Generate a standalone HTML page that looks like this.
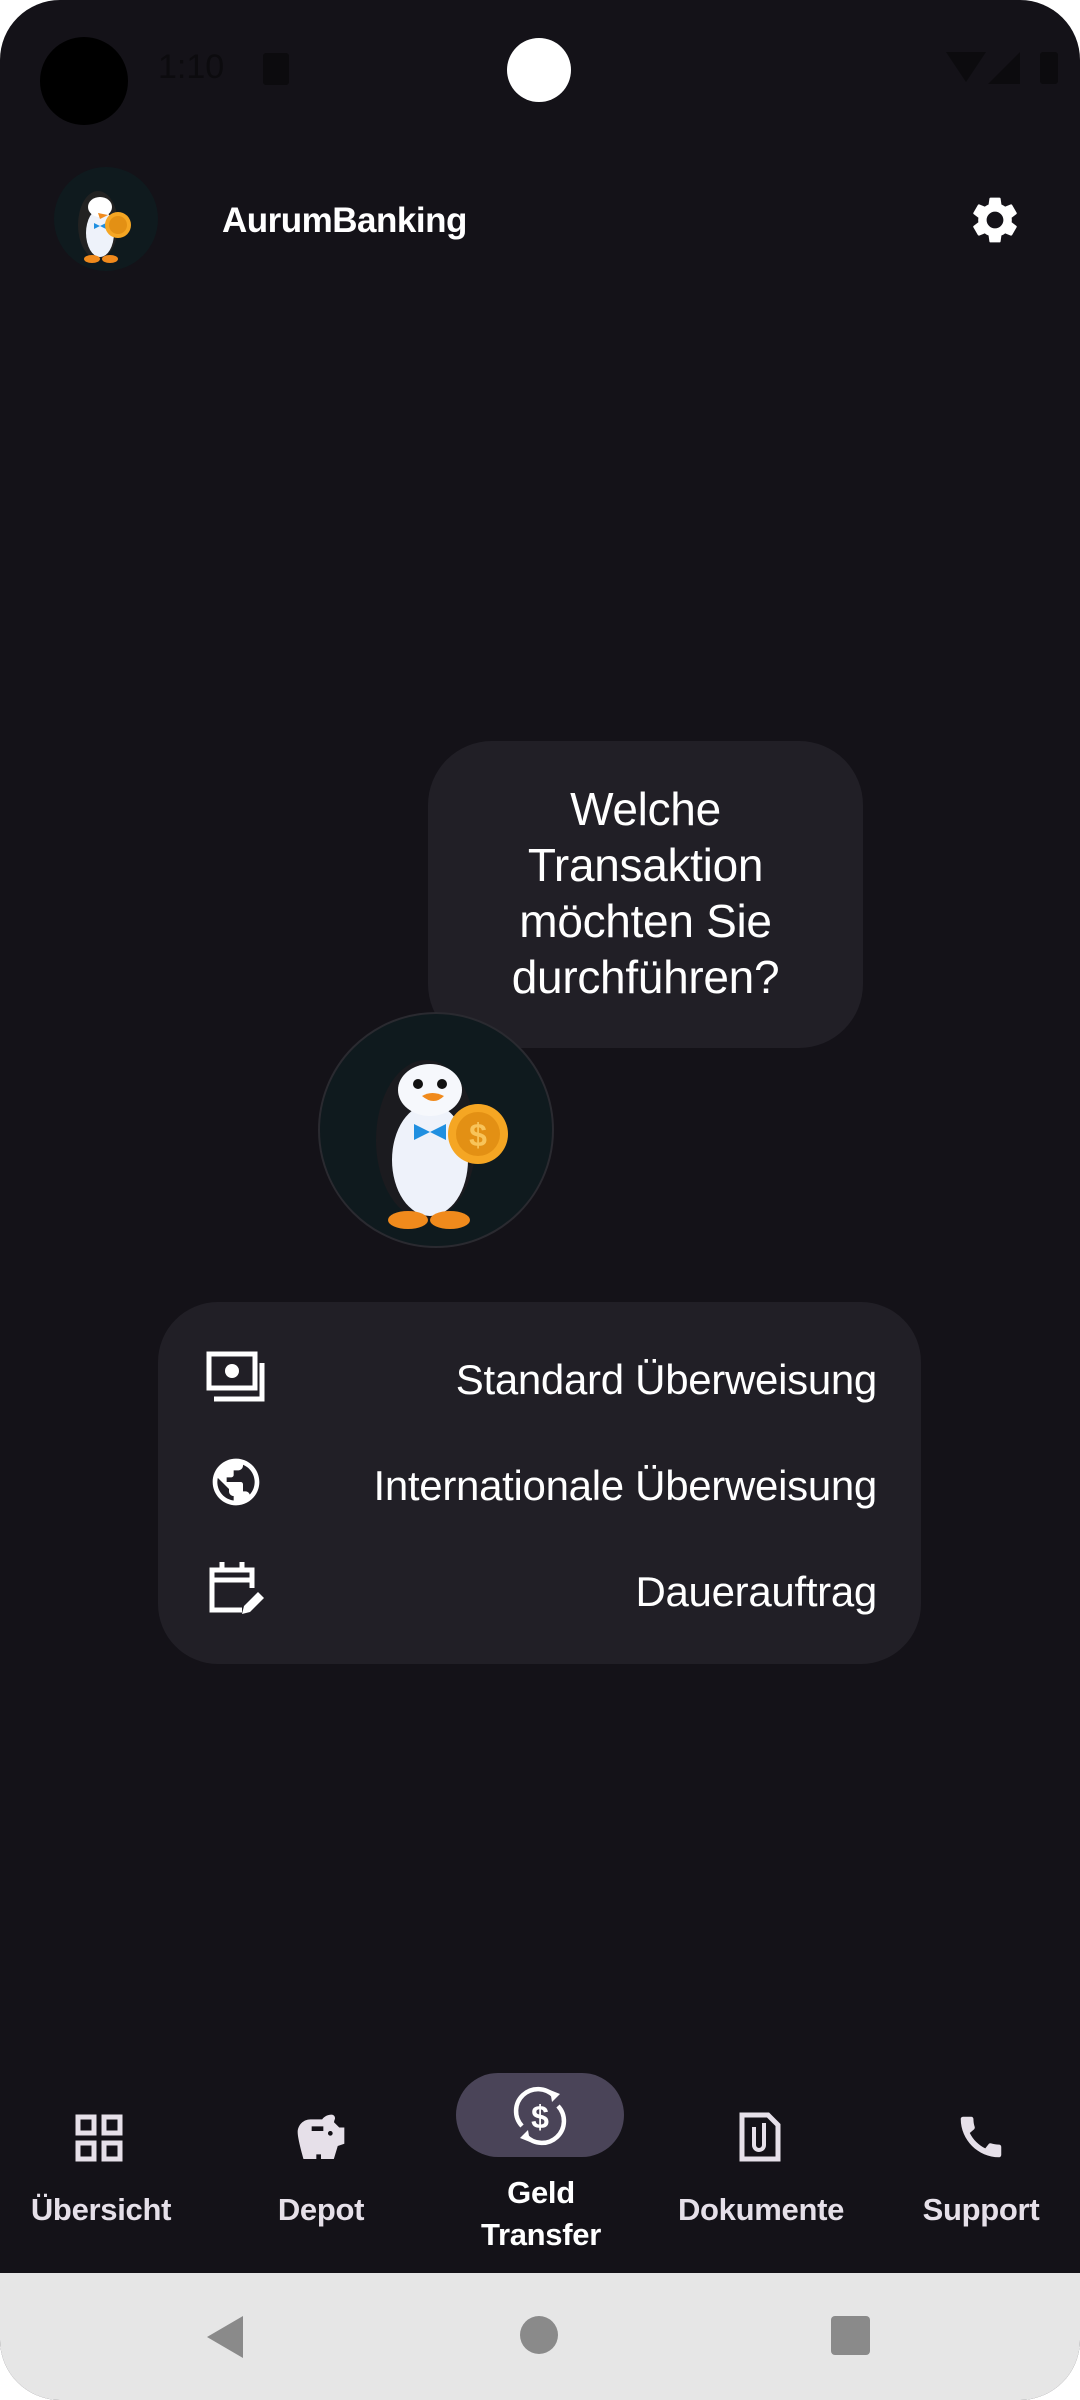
<!DOCTYPE html>
<html><head><meta charset="utf-8"><style>
*{margin:0;padding:0;box-sizing:border-box}
html,body{width:1080px;height:2400px;background:#fff;overflow:hidden;font-family:"Liberation Sans",sans-serif}
.screen{position:absolute;left:0;top:0;width:1080px;height:2400px;background:#141218;border-radius:60px 60px 60px 60px;overflow:hidden}
.abs{position:absolute}
.title{left:222px;top:201px;font-size:35px;color:#fff;font-weight:bold;letter-spacing:-0.5px}
.bubble{left:428px;top:741px;width:435px;height:307px;background:#211F26;border-radius:64px;color:#fff;font-size:46px;text-align:center;line-height:56px;padding-top:40px;letter-spacing:-0.3px}
.card{left:158px;top:1302px;width:763px;height:362px;background:#211F26;border-radius:60px}
.row{position:absolute;right:44px;font-size:42px;color:#fff;text-align:right;letter-spacing:-0.3px}
.nav{position:absolute;left:0;top:2273px;width:1080px;height:127px;background:#E6E6E6}
.lbl{position:absolute;font-size:31px;color:#E6E0E9;font-weight:bold;text-align:center;width:220px;letter-spacing:-0.3px}
</style></head><body>
<div class="screen">
 <div class="abs" style="left:40px;top:37px;width:88px;height:88px;border-radius:50%;background:#000"></div>
 <div class="abs" style="left:507px;top:38px;width:64px;height:64px;border-radius:50%;background:#fff"></div>
 <div class="abs" style="left:158px;top:48px;font-size:34px;color:#0c0b0e">1:10</div>
 <div class="abs" style="left:263px;top:53px;width:26px;height:32px;background:#0c0b0e;border-radius:3px"></div>
 <div class="abs" style="left:946px;top:52px;width:0;height:0;border-left:20px solid transparent;border-right:20px solid transparent;border-top:30px solid #0c0b0e"></div>
 <div class="abs" style="left:988px;top:52px;width:0;height:0;border-left:32px solid transparent;border-bottom:32px solid #0c0b0e"></div>
 <div class="abs" style="left:1040px;top:52px;width:18px;height:32px;background:#0c0b0e;border-radius:3px"></div>

 <svg class="abs" style="left:54px;top:167px" width="104" height="104" viewBox="0 0 104 104">
  <circle cx="52" cy="52" r="52" fill="#0f1a1e"/>
  <ellipse cx="44" cy="58" rx="20" ry="34" fill="#222"/>
  <ellipse cx="46" cy="66" rx="14" ry="24" fill="#eef2fa"/>
  <ellipse cx="46" cy="40" rx="12" ry="10" fill="#fff"/>
  <path d="M44 46 l10 2 l-8 4z" fill="#f08a1c"/>
  <path d="M40 56 l6 3 l-6 3z M52 56 l-6 3 l6 3z" fill="#1f8fe0"/>
  <circle cx="64" cy="58" r="13" fill="#f5a623"/>
  <circle cx="64" cy="58" r="9" fill="#e39014"/>
  <ellipse cx="38" cy="92" rx="8" ry="4" fill="#f08a1c"/><ellipse cx="56" cy="92" rx="8" ry="4" fill="#f08a1c"/>
 </svg>
 <div class="abs title">AurumBanking</div>
 <svg class="abs" style="left:967px;top:192px" width="56" height="56" viewBox="0 0 24 24"><path fill="#fff" d="M19.14 12.94c.04-.3.06-.61.06-.94 0-.32-.02-.64-.07-.94l2.030-1.58a.49.49 0 0 0 .12-.61l-1.92-3.32a.488.488 0 0 0-.59-.22l-2.39.96c-.5-.38-1.03-.7-1.62-.94l-.36-2.54a.484.484 0 0 0-.48-.41h-3.84c-.24 0-.43.17-.47.41l-.36 2.54c-.59.24-1.13.57-1.62.94l-2.39-.96c-.22-.08-.47 0-.59.22L2.74 8.87c-.12.21-.08.47.12.61l2.03 1.58c-.05.3-.09.63-.09.94s.02.64.07.94l-2.03 1.58a.49.49 0 0 0-.12.61l1.92 3.32c.12.22.37.29.59.22l2.39-.96c.5.38 1.03.7 1.62.94l.36 2.54c.05.24.24.41.48.41h3.84c.24 0 .44-.17.47-.41l.36-2.54c.59-.24 1.13-.56 1.62-.94l2.39.96c.22.08.47 0 .59-.22l1.92-3.32c.12-.22.07-.47-.12-.61l-2.01-1.58zM12 15.6c-1.98 0-3.6-1.62-3.6-3.6s1.62-3.6 3.6-3.6 3.6 1.62 3.6 3.6-1.62 3.6-3.6 3.6z"/></svg>

 <div class="abs bubble">Welche<br>Transaktion<br>möchten Sie<br>durchführen?</div>

 <svg class="abs" style="left:318px;top:1012px" width="236" height="236" viewBox="0 0 236 236">
  <circle cx="118" cy="118" r="117" fill="#0f1a1e" stroke="#2a2a30" stroke-width="2"/>
  <ellipse cx="108" cy="128" rx="50" ry="80" fill="#1b1b1f"/>
  <ellipse cx="112" cy="148" rx="38" ry="56" fill="#eef2fa"/>
  <ellipse cx="112" cy="78" rx="32" ry="26" fill="#f6f8fc"/>
  <circle cx="100" cy="72" r="5" fill="#111"/><circle cx="124" cy="72" r="5" fill="#111"/>
  <path d="M104 84 q10 -6 22 0 q-10 10 -22 0z" fill="#f08a1c"/>
  <path d="M96 112 l16 8 l-16 8z M128 112 l-16 8 l16 8z" fill="#1f8fe0"/>
  <circle cx="160" cy="122" r="30" fill="#f5a623"/>
  <circle cx="160" cy="122" r="22" fill="#e39014"/>
  <text x="160" y="134" font-size="32" font-family="Liberation Sans" font-weight="bold" fill="#f8c45a" text-anchor="middle">$</text>
  <ellipse cx="90" cy="208" rx="20" ry="9" fill="#f08a1c"/><ellipse cx="132" cy="208" rx="20" ry="9" fill="#f08a1c"/>
 </svg>

 <div class="abs card">
  <svg class="abs" style="left:48px;top:49px" width="60" height="52" viewBox="0 0 60 52"><rect x="3" y="3" width="46" height="34" fill="none" stroke="#fff" stroke-width="5"/><circle cx="26" cy="20" r="7" fill="#fff"/><path d="M56 12 v36 h-48" fill="none" stroke="#fff" stroke-width="5"/></svg>
  <div class="row" style="top:54px">Standard Überweisung</div>
  <svg class="abs" style="left:50px;top:152px" width="56" height="56" viewBox="0 0 24 24"><path fill="#fff" d="M12 2C6.48 2 2 6.480 2 12s4.48 10 10 10 10-4.48 10-10S17.52 2 12 2zm-1 17.93c-3.95-.49-7-3.85-7-7.93 0-.62.08-1.21.21-1.79L9 15v1c0 1.1.9 2 2 2v1.93zm6.9-2.54c-.26-.81-1-1.39-1.9-1.39h-1v-3c0-.55-.45-1-1-1H8v-2h2c.55 0 1-.45 1-1V7h2c1.1 0 2-.9 2-2v-.41c2.93 1.19 5 4.06 5 7.41 0 2.08-.8 3.97-2.1 5.39z"/></svg>
  <div class="row" style="top:160px">Internationale Überweisung</div>
  <svg class="abs" style="left:48px;top:258px" width="60" height="58" viewBox="0 0 60 58"><path d="M36 50 H6 V10 H46 V28" fill="none" stroke="#fff" stroke-width="5"/><path d="M6 20 H46" stroke="#fff" stroke-width="5"/><path d="M16 2 V10 M36 2 V10" stroke="#fff" stroke-width="5"/><path d="M36 54 l2 -8 l14 -14 l6 6 l-14 14z" fill="#fff"/></svg>
  <div class="row" style="top:266px">Dauerauftrag</div>
 </div>

 <svg class="abs" style="left:75px;top:2114px" width="48" height="48" viewBox="0 0 48 48"><g fill="none" stroke="#E6E0E9" stroke-width="5"><rect x="3" y="3" width="16" height="16"/><rect x="29" y="3" width="16" height="16"/><rect x="3" y="29" width="16" height="16"/><rect x="29" y="29" width="16" height="16"/></g></svg>
 <div class="lbl" style="left:-9px;top:2192px">Übersicht</div>
 <svg class="abs" style="left:293px;top:2110px" width="56" height="56" viewBox="0 0 24 24"><path fill="#E6E0E9" d="M19.83 7.5l-2.27-2.27c.07-.42.18-.81.32-1.15.08-.18.12-.37.12-.58 0-.83-.67-1.5-1.5-1.5-1.64 0-3.09.79-4 2h-5C4.46 4 2 6.46 2 9.5S4.5 21 4.5 21H10v-2h2v2h5.5l1.68-5.59 2.82-.94V7.5h-2.17zM13 9H8V7h5v2zm3 2c-.55 0-1-.45-1-1s.45-1 1-1 1 .45 1 1-.45 1-1 1z"/></svg>
 <div class="lbl" style="left:211px;top:2192px">Depot</div>
 <div class="abs" style="left:456px;top:2073px;width:168px;height:84px;border-radius:42px;background:#4A4458"></div>
 <svg class="abs" style="left:510px;top:2086px" width="60" height="60" viewBox="0 0 60 60"><g fill="none" stroke="#fff" stroke-width="4.5"><path d="M12 40 A20 20 0 0 1 44 10"/><path d="M48 20 A20 20 0 0 1 16 50"/></g><path d="M40 4 l10 4 l-8 8z M20 56 l-10 -4 l8 -8z" fill="#fff"/><text x="30" y="42" font-size="32" font-weight="bold" font-family="Liberation Sans" fill="#fff" text-anchor="middle">$</text></svg>
 <div class="lbl" style="left:431px;top:2172px;color:#fff;line-height:42px">Geld<br>Transfer</div>
 <svg class="abs" style="left:738px;top:2111px" width="44" height="52" viewBox="0 0 44 52"><path d="M4 4 H30 L40 14 V48 H4 Z" fill="none" stroke="#E6E0E9" stroke-width="5"/><path d="M16 16 V34 a5 5 0 0 0 10 0 V12" fill="none" stroke="#E6E0E9" stroke-width="4"/></svg>
 <div class="lbl" style="left:651px;top:2192px">Dokumente</div>
 <svg class="abs" style="left:954px;top:2110px" width="54" height="54" viewBox="0 0 24 24"><path fill="#E6E0E9" d="M20.01 15.38c-1.23 0-2.42-.2-3.53-.56a.977.977 0 0 0-1.01.24l-1.57 1.97c-2.830-1.35-5.48-3.9-6.89-6.83l1.95-1.66c.27-.28.35-.67.24-1.020-.37-1.11-.56-2.3-.56-3.53 0-.54-.45-.99-.99-.99H4.19C3.65 3 3 3.24 3 3.99 3 13.28 10.73 21 20.01 21c.71 0 .99-.63.99-1.18v-3.45c0-.54-.45-.99-.99-.99z"/></svg>
 <div class="lbl" style="left:871px;top:2192px">Support</div>

 <div class="nav">
  <div class="abs" style="left:207px;top:43px;width:0;height:0;border-top:21px solid transparent;border-bottom:21px solid transparent;border-right:36px solid #8a8a8a"></div>
  <div class="abs" style="left:520px;top:43px;width:38px;height:38px;border-radius:50%;background:#8a8a8a"></div>
  <div class="abs" style="left:831px;top:43px;width:39px;height:39px;border-radius:4px;background:#8a8a8a"></div>
 </div>
</div>
</body></html>
